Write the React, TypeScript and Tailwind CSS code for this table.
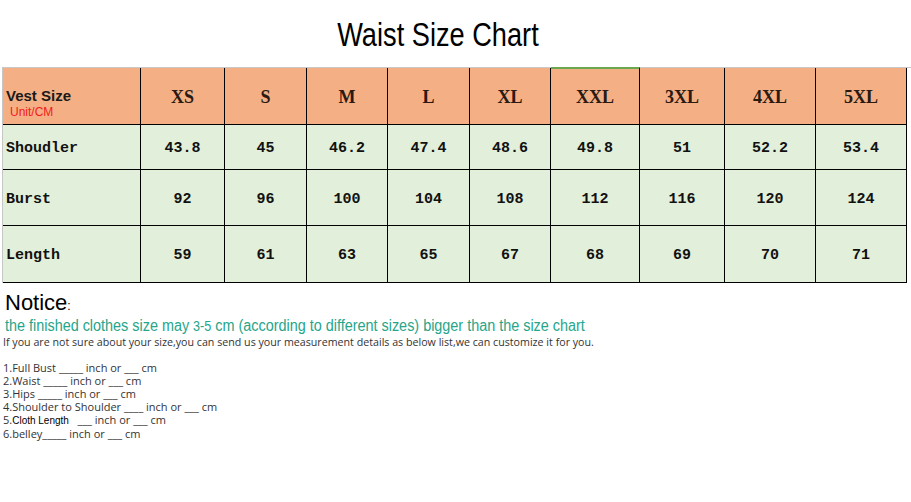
const sizes = ["XS", "S", "M", "L", "XL", "XXL", "3XL", "4XL", "5XL"];

const rows = [
  { name: "Shoudler", h: "h-[45px]", vals: ["43.8", "45", "46.2", "47.4", "48.6", "49.8", "51", "52.2", "53.4"] },
  { name: "Burst", h: "h-[56px]", vals: ["92", "96", "100", "104", "108", "112", "116", "120", "124"] },
  { name: "Length", h: "h-[57px]", vals: ["59", "61", "63", "65", "67", "68", "69", "70", "71"] },
];

const grid = "grid grid-cols-[138px_84px_82px_81px_82px_81px_89px_85px_91px_91px_1fr]";

const list = [
  "1.Full Bust _____ inch or ___ cm",
  "2.Waist _____ inch or ___ cm",
  "3.Hips _____ inch or ___ cm",
  "4.Shoulder to Shoulder ____ inch or ___ cm",
];

export default function App() {
  return (
    <div className="relative h-[502px] w-[911px] overflow-hidden bg-white">
      <div className="flex h-[67px] items-center justify-center pr-[36px] pt-[1px]">
        <h1
          className="origin-center scale-x-[0.8] text-[34px] leading-none text-black"
          style={{ fontFamily: '"Liberation Sans Narrow", "Liberation Sans", Arial, sans-serif' }}
        >
          Waist Size Chart
        </h1>
      </div>

      <div className="ml-[2px] border-l border-[#c6c6c6]">
        {/* header row */}
        <div className={`${grid} h-[58px] border-t border-[#c8c8c8]`}>
          <div className="flex flex-col justify-center border-r border-b border-black bg-[#f4b084] pl-[3px] pt-[14px]">
            <div className="font-['Liberation_Sans',Arial,sans-serif] text-[15px] font-bold leading-[18px] text-[#1a1a1a]">
              Vest Size
            </div>
            <div className="pl-[4px] font-['Liberation_Sans',Arial,sans-serif] text-[12px] leading-[15px] text-[#f21b1b]">
              Unit/CM
            </div>
          </div>
          {sizes.map((s) => (
            <div
              key={s}
              className={`flex items-center justify-center border-r border-b border-black bg-[#f4b084] font-['Liberation_Serif',serif] text-[18px] font-bold text-[#2a1a12] ${
                s === "XXL" ? "-mt-px border-t-2 border-t-[#6aa84f] pt-[1px]" : "pt-[3px]"
              }`}
            >
              {s}
            </div>
          ))}
          <div className="bg-white" />
        </div>

        {rows.map((r) => (
          <div key={r.name} className={`${grid} ${r.h}`}>
            <div className="flex items-center border-r border-b border-black bg-[#e2efda] pl-[3px] pt-[5px] font-['Liberation_Mono',monospace] text-[15px] font-bold text-[#111]">
              {r.name}
            </div>
            {r.vals.map((v, i) => (
              <div
                key={i}
                className="flex items-center justify-center border-r border-b border-black bg-[#e2efda] pt-[5px] font-['Liberation_Mono',monospace] text-[15px] font-bold text-[#111]"
              >
                {v}
              </div>
            ))}
            <div className="bg-white" />
          </div>
        ))}
      </div>

      <div className="pl-[5px] pt-[9px]">
        <div className="font-['Liberation_Sans',Arial,sans-serif] text-[22px] leading-[22px] text-black">
          Notice<span className="text-[12px]">:</span>
        </div>
        <div className="origin-left scale-x-[0.9] whitespace-nowrap font-['Liberation_Sans',Arial,sans-serif] text-[16px] leading-[18px] text-[#26a58a]">
          the finished clothes size may <span className="text-[14px]">3-5</span> cm (according to different sizes) bigger than the size chart
        </div>
      </div>

      <div className="pl-[3px] font-['Open_Sans',sans-serif] text-[11px] leading-[13px] text-[#333]">
        <div className="origin-left scale-x-[0.97] whitespace-nowrap">
          If you are not sure about your size,you can send us your measurement details as below list,we can customize it for you.
        </div>
        <div className="mt-[13px]">
          {list.map((t) => (
            <div key={t} className="whitespace-nowrap">
              {t}
            </div>
          ))}
          <div className="whitespace-nowrap">
            5.<span className="font-['Liberation_Sans',Arial,sans-serif] text-[10px] text-black">Cloth Length</span>
            &nbsp;&nbsp; ___ inch or ___ cm
          </div>
          <div className="whitespace-nowrap">6.belley_____ inch or ___ cm</div>
        </div>
      </div>
    </div>
  );
}
